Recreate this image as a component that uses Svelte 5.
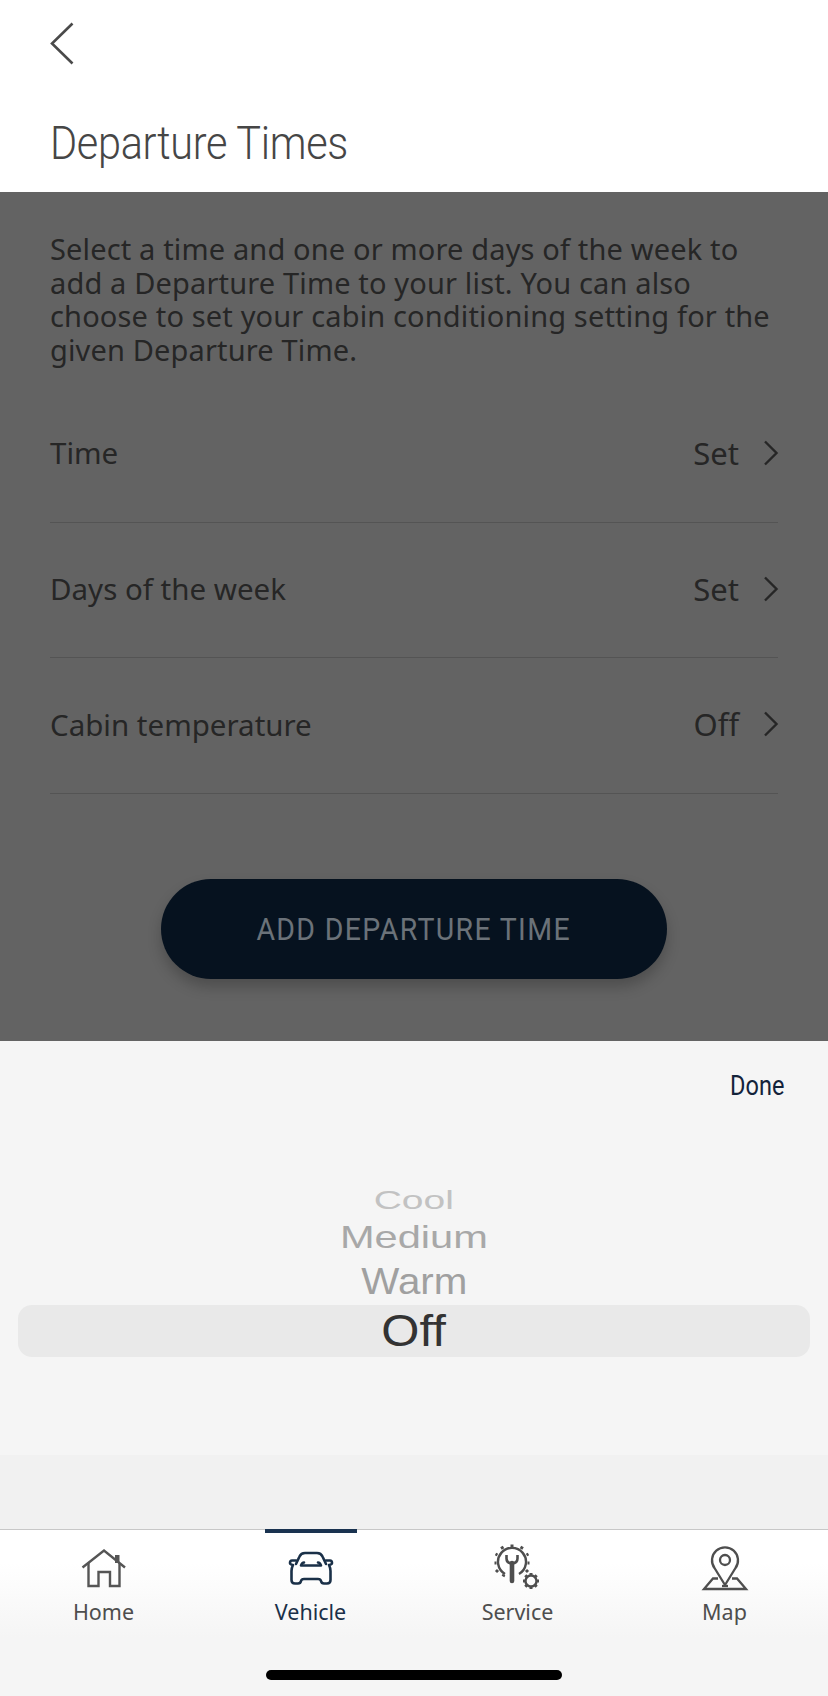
<script>
  const rows = [
    { label: 'Time', value: 'Set' },
    { label: 'Days of the week', value: 'Set' },
    { label: 'Cabin temperature', value: 'Off' }
  ];
</script>

<div class="page">
  <header class="head">
    <svg class="back" width="26" height="44" viewBox="0 0 26 44" fill="none" stroke="#4a4a4a" stroke-width="2.6">
      <path d="M22.5 1.5 L2 21.5 L22.5 41.5" />
    </svg>
    <h1>Departure Times</h1>
  </header>

  <section class="dim">
    <p class="intro">Select a time and one or more days of the week to add a Departure Time to your list. You can also choose to set your cabin conditioning setting for the given Departure Time.</p>
    <div class="rows">
      {#each rows as r}
        <div class="row">
          <span>{r.label}</span>
          <span class="val">{r.value}
            <svg width="16" height="26" viewBox="0 0 16 26" fill="none" stroke="#262626" stroke-width="2.4"><path d="M2 1.5 L13.5 13 L2 24.5" /></svg>
          </span>
        </div>
      {/each}
    </div>
    <div class="btnwrap"><div class="btn"><span>ADD DEPARTURE TIME</span></div></div>
  </section>

  <section class="sheet">
    <div class="done"><span>Done</span></div>
    <div class="wheel">
      <div class="opt cool">Cool</div>
      <div class="opt medium">Medium</div>
      <div class="opt warm">Warm</div>
      <div class="selected"><span>Off</span></div>
    </div>
  </section>

  <nav class="tabs">
    <div class="tab">
      <svg width="48" height="48" viewBox="0 0 48 48" fill="none" stroke="#555" stroke-width="2.4">
        <path d="M2.5 23.5 L24 6.5 L45 23.5" />
        <path d="M8.5 19 V42 H18.5 V28 H30 V42 H39.5 V19" />
        <path d="M35 11 h4.5 v8 h-4.5z" fill="#555" stroke="none" />
      </svg>
      <span>Home</span>
    </div>
    <div class="tab active">
      <i class="marker"></i>
      <svg width="48" height="48" viewBox="0 0 48 48" fill="none" stroke="#1a3048" stroke-width="2.6" stroke-linecap="round" stroke-linejoin="round">
        <path d="M9 20 L12.5 12.5 Q14 9 18 9 H30 Q34 9 35.500 12.500 L39 20" />
        <path d="M9 16.500 H5 Q3 16.500 3 19 Q3 20.500 6 21 Q4.500 24 4.500 27 V36 Q4.500 39.500 8 39.500 H11 Q13.500 39.500 14 37 Q14.500 35 17 35 H31 Q33.500 35 34 37 Q34.500 39.500 37 39.500 H40 Q43.500 39.500 43.500 36 V27 Q43.500 24 42 21 Q45 20.500 45 19 Q45 16.500 43 16.500 H39" />
        <path d="M14 21.500 Q15 18.500 17 18.500 M34 21.500 Q33 18.500 31 18.500 M14.500 21.500 H33.500" />
      </svg>
      <span>Vehicle</span>
    </div>
    <div class="tab">
      <svg width="48" height="48" viewBox="0 0 48 48" fill="none" stroke="#4e4e4e">
        <path d="M11 30 A14 14 0 1 1 25 30" stroke-width="2.4" />
        <path d="M17 4 V1.500 M26 6 L27.500 3.500 M8 6 L6.500 3.500 M2.500 12 L0.500 11 M31.500 12 L33.500 11 M1.500 20 H-0.500 M32.500 20 H34.500 M3 27 L1 29 M31 27 L33 29 M9 31.500 L8 33.500" stroke-width="3" transform="translate(1 -1)" />
        <path d="M12.500 11 V14.500 Q12.500 19 18 19.500 Q23.500 19 23.500 14.500 V11" stroke-width="2.6" />
        <path d="M18 19 V37" stroke-width="4.600" stroke-linecap="round" />
        <circle cx="37" cy="37" r="5.500" stroke-width="2.400" />
        <path d="M37 29 V31.500 M37 42.500 V45 M29 37 H31.500 M42.500 37 H45 M31.300 31.300 L33 33 M41 41 L42.700 42.700 M31.300 42.700 L33 41 M41 33 L42.700 31.300" stroke-width="3" />
      </svg>
      <span>Service</span>
    </div>
    <div class="tab">
      <svg width="48" height="48" viewBox="0 0 48 48" fill="none" stroke="#4e4e4e" stroke-width="2.300">
        <path d="M24 41 L13.500 24 A13 13 0 1 1 34.500 24 Z" stroke-linejoin="round" />
        <circle cx="24" cy="16" r="5" />
        <path d="M17 34.500 H12 L3 45 H45 L36 34.500 H31" />
        <path d="M21 42 H27" />
      </svg>
      <span>Map</span>
    </div>
    <i class="homebar"></i>
  </nav>
</div>

<style>
  :global(body) { margin: 0; background: #fff; }
  .page {
    width: 828px;
    height: 1696px;
    display: flex;
    flex-direction: column;
    overflow: hidden;
    font-family: "Noto Sans", "Open Sans", sans-serif;
    color: #262626;
  }
  .head {
    height: 192px;
    box-sizing: border-box;
    padding: 22px 50px 0;
    background: #fff;
    flex: none;
  }
  .back { display: block; }
  h1 {
    margin: 51px 0 0;
    font-family: Roboto, sans-serif;
    font-weight: 300;
    font-size: 46px;
    line-height: 52px;
    color: #464646;
    letter-spacing: -0.3px;
    transform: scaleX(0.9);
    transform-origin: left center;
    white-space: nowrap;
  }
  .dim {
    height: 849px;
    flex: none;
    box-sizing: border-box;
    background: #636363;
    padding: 40px 50px 0;
  }
  .intro {
    margin: 0;
    font-size: 29px;
    line-height: 33.5px;
    color: #262626;
    width: 728px;
    letter-spacing: 0.15px;
  }
  .rows { margin-top: 21px; }
  .row {
    height: 135.7px;
    box-sizing: border-box;
    border-bottom: 1.5px solid #545454;
    display: flex;
    align-items: center;
    justify-content: space-between;
    font-size: 29.5px;
    padding-bottom: 3px;
  }
  .val { display: flex; align-items: center; gap: 24px; font-size: 31px; }
  .val svg { display: block; margin-right: -1px; }
  .btnwrap { display: flex; justify-content: center; margin-top: 85px; }
  .btn {
    width: 506px;
    height: 100px;
    border-radius: 50px;
    background: #06121f;
    color: #6b7279;
    font-family: Roboto, sans-serif;
    font-size: 32px;
    letter-spacing: 1.5px;
    display: flex;
    align-items: center;
    justify-content: center;
    box-shadow: 0 8px 14px rgba(0, 0, 0, 0.22);
  }
  .btn span { display: block; white-space: nowrap; transform: scaleX(0.89); }
  .sheet {
    height: 488px;
    flex: none;
    box-sizing: border-box;
    background: linear-gradient(#f5f5f5 0, #f5f5f5 414px, #f1f1f1 414px, #f1f1f1 100%);
    padding: 0 18px;
  }
  .done {
    display: flex;
    justify-content: flex-end;
    padding: 29px 26px 0 0;
    font-family: Roboto, sans-serif;
    font-size: 27px;
    line-height: 32px;
    color: #13233a;
  }
  .done span { display: block; transform: scaleX(0.87); transform-origin: right center; }
  .wheel {
    margin-top: 83px;
    display: flex;
    flex-direction: column;
    align-items: center;
    font-family: "Liberation Sans", Arial, sans-serif;
    color: #a8a8a8;
  }
  .opt { line-height: 44px; height: 44px; }
  .cool { font-size: 26px; transform: scaleX(1.5); color: #c2c2c2; height: 30px; line-height: 30px; }
  .medium { font-size: 32px; transform: scaleX(1.3); height: 44px; }
  .warm { font-size: 36px; transform: scaleX(1.12); height: 46px; line-height: 46px; color: #a0a0a0; }
  .selected {
    align-self: stretch;
    display: flex;
    justify-content: center;
    height: 52px;
    margin-top: -0.5px;
    background: #e9e9e9;
    border-radius: 14px;
    font-size: 45px;
    line-height: 52px;
    color: #333;
  }
  .selected span { display: block; transform: scaleX(1.09); }
  .tabs {
    position: relative;
    flex: 1;
    display: grid;
    grid-template-columns: repeat(4, 207px);
    border-top: 1.500px solid #c8c8c8;
    background: linear-gradient(#fff 0, #fff 20%, #f5f5f5 65%, #f5f5f5 100%);
  }
  .tab {
    position: relative;
    display: flex;
    flex-direction: column;
    align-items: center;
    padding-top: 14px;
    font-size: 21.5px;
    color: #4e4e4e;
    height: 90px;
  }
  .tab span { margin-top: 6px; line-height: 28px; }
  .tab svg { display: block; overflow: visible; }
  .active { color: #1a3048; }
  .marker {
    position: absolute;
    left: 58px;
    top: -1.500px;
    width: 92px;
    height: 4.500px;
    background: #1a3350;
  }
  .homebar {
    position: absolute;
    left: 266px;
    top: 140px;
    width: 296px;
    height: 10px;
    border-radius: 5px;
    background: #000;
  }
</style>
